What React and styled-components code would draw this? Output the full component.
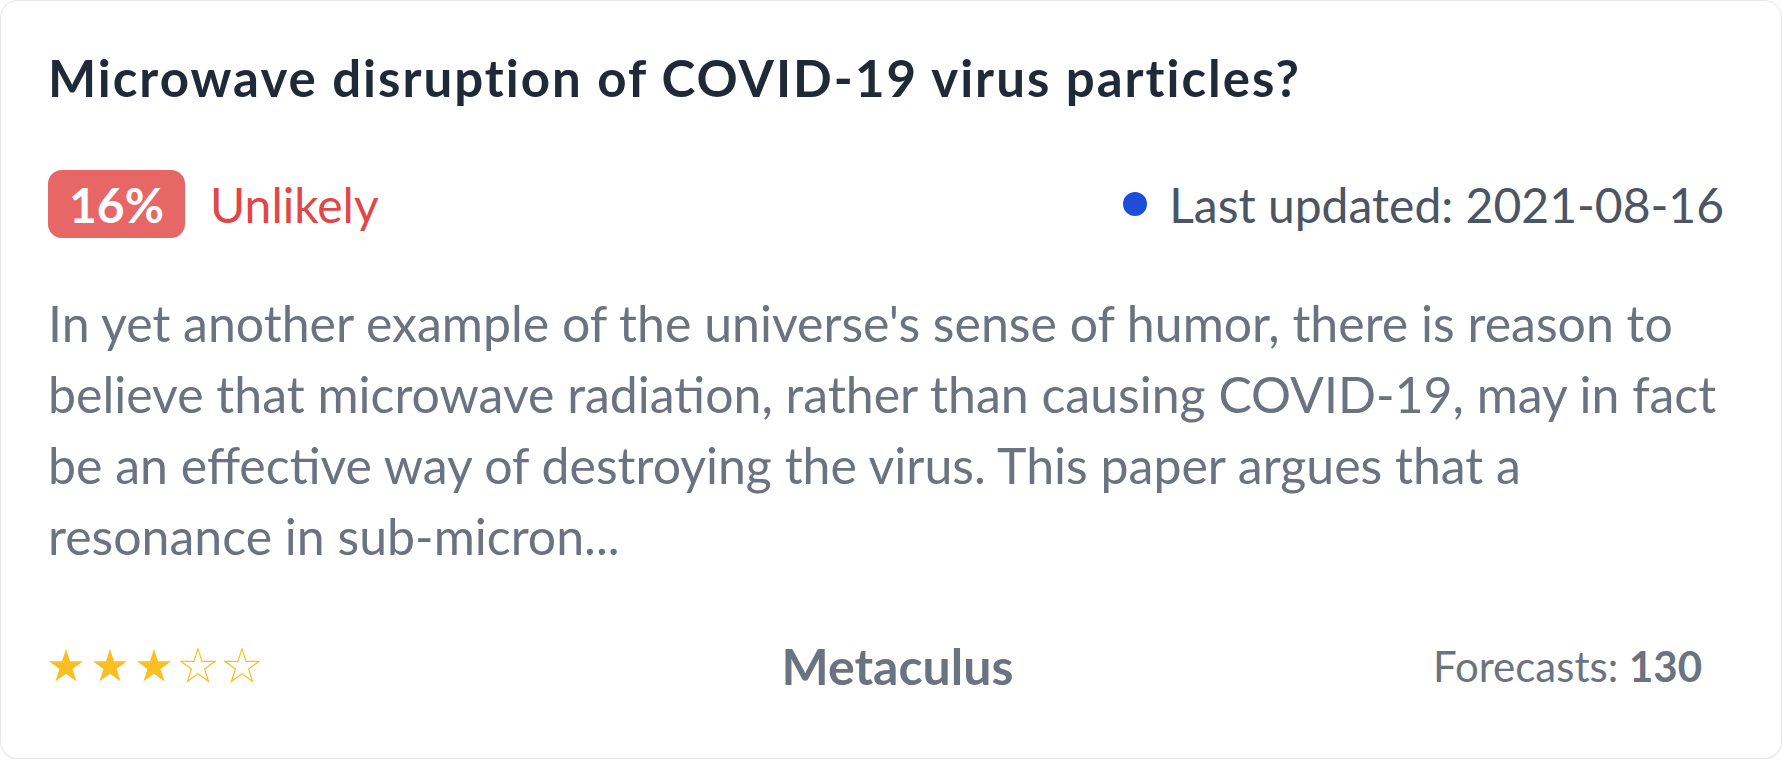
import React from 'react';
import styled, { createGlobalStyle } from 'styled-components';

const GlobalStyle = createGlobalStyle`
    html, body {
        margin: 0;
        padding: 0;
        background: #ffffff;
    }
    body {
        font-family: "Lato", "Noto Sans", sans-serif;
    }
`

const question = {
    title: 'Microwave disruption of COVID-19 virus particles?',
    probability: 16,
    label: 'Unlikely',
    updated: '2021-08-16',
    description:
        "In yet another example of the universe's sense of humor, there is reason to believe that microwave radiation, rather than causing COVID-19, may in fact be an effective way of destroying the virus. This paper argues that a resonance in sub-micron...",
    stars: 3,
    platform: 'Metaculus',
    forecasts: 130,
}

function Star({ filled }) {
    return (
        <svg width="36" height="36" viewBox="0 0 24 24">
            <polygon
                points="12,0.6 14.7,8.88 23.41,8.89 16.37,14.02 19.05,22.31 12,17.2 4.95,22.31 7.63,14.02 0.59,8.89 9.3,8.88"
                fill={filled ? '#fbbf24' : 'none'}
                stroke="#fbbf24"
                strokeWidth={filled ? 0 : 0.8}
            />
        </svg>
    )
}

function App() {
    return (
        <>
            <GlobalStyle />
            <Card>
                <Title>{question.title}</Title>
                <MetaRow>
                    <Chance>
                        <Badge>{question.probability}%</Badge>
                        <Verdict>{question.label}</Verdict>
                    </Chance>
                    <Updated>
                        <Dot />
                        Last updated: {question.updated}
                    </Updated>
                </MetaRow>
                <Description>{question.description}</Description>
                <Footer>
                    <Stars>
                        {[0, 1, 2, 3, 4].map((i) => (
                            <Star key={i} filled={i < question.stars} />
                        ))}
                    </Stars>
                    <Platform>{question.platform}</Platform>
                    <Forecasts>
                        Forecasts: <b>{question.forecasts}</b>
                    </Forecasts>
                </Footer>
            </Card>
        </>
    )
}

const Card = styled.div`
    box-sizing: border-box;
    width: 1782px;
    height: 759px;
    padding: 45px 50px 0 47px;
    background: #ffffff;
    border: 1px solid #e5e7eb;
    border-radius: 18px;
    box-shadow: 0 1px 3px rgba(0, 0, 0, 0.06);
    display: flex;
    flex-direction: column;
`

const Title = styled.h2`
    margin: 0;
    font-size: 51px;
    line-height: 64px;
    letter-spacing: 2px;
    font-weight: 700;
    color: #1f2937;
`

const MetaRow = styled.div`
    margin-top: 60px;
    display: flex;
    align-items: center;
    justify-content: space-between;
    height: 68px;
`

const Chance = styled.div`
    display: flex;
    align-items: center;
    gap: 25px;
`

const Badge = styled.span`
    display: inline-flex;
    align-items: center;
    justify-content: center;
    height: 68px;
    padding: 0 21px;
    border-radius: 14px;
    background: #e76767;
    color: #ffffff;
    font-size: 48px;
    font-weight: 700;
`

const Verdict = styled.span`
    font-size: 48px;
    color: #e04848;
`

const Updated = styled.div`
    display: flex;
    align-items: center;
    gap: 22px;
    font-size: 48px;
    color: #4b5563;
    padding-right: 7px;
`

const Dot = styled.span`
    width: 24px;
    height: 24px;
    border-radius: 50%;
    background: #1d4ed8;
`

const Description = styled.p`
    margin: 50px 0 0 0;
    font-size: 50px;
    line-height: 71px;
    letter-spacing: 0;
    color: #6b7280;
`

const Footer = styled.div`
    margin-top: 62px;
    height: 64px;
    display: grid;
    grid-template-columns: 1fr auto 1fr;
    align-items: center;
`

const Stars = styled.div`
    display: flex;
    gap: 8px;
`

const Platform = styled.span`
    margin-left: 16px;
    font-size: 50px;
    font-weight: 700;
    color: #6b7280;
`

const Forecasts = styled.span`
    justify-self: end;
    padding-right: 29px;
    font-size: 42px;
    color: #6b7280;
    b {
        font-weight: 700;
    }
`

export default App
